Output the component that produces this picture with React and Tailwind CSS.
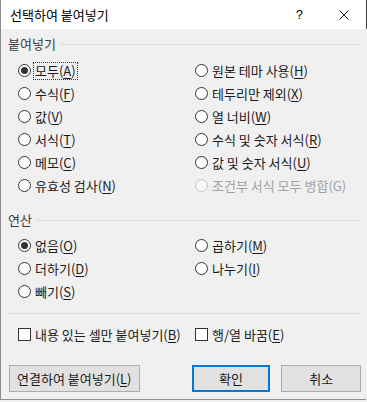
import React from "react";

const FONT = { fontFamily: '"Noto Sans CJK KR", "Noto Sans", sans-serif' };

function Radio({ checked, disabled }) {
  return (
    <span
      className={
        "w-[13px] h-[13px] rounded-full border flex items-center justify-center shrink-0 " +
        (disabled ? "border-[#c4c4c4] bg-[#f7f7f7]" : "border-[#333333] bg-white")
      }
    >
      {checked && <span className="w-[7px] h-[7px] rounded-full bg-[#333333]" />}
    </span>
  );
}

function Check() {
  return <span className="w-[13px] h-[13px] border border-[#333333] bg-white shrink-0" />;
}

function Label({ t, k, disabled, noUnderline }) {
  return (
    <span className={disabled ? "text-[#a0a0a0]" : "text-[#1a1a1a]"}>
      {t}(
      {noUnderline ? k : <span className="underline underline-offset-[2px] decoration-1">{k}</span>})
    </span>
  );
}

function RadioItem({ t, k, checked, disabled, focus }) {
  return (
    <div className="h-[23px] flex items-center">
      <Radio checked={checked} disabled={disabled} />
      {focus ? (
        <span className="ml-[2px] px-[1px] border border-dotted border-[#333333] leading-[16px]">
          <Label t={t} k={k} />
        </span>
      ) : (
        <span className="ml-[4px]">
          <Label t={t} k={k} disabled={disabled} noUnderline={disabled} />
        </span>
      )}
    </div>
  );
}

function GroupLabel({ children }) {
  return (
    <div className="h-[16px] flex items-center">
      <span className="text-[#3a3a3a] leading-[16px]">{children}</span>
      <span className="flex-1 h-px bg-[#dcdcdc] ml-[4px]" />
    </div>
  );
}

function Button({ children, primary, className }) {
  return (
    <div
      className={
        "h-[27px] flex items-center justify-center bg-[#e1e1e1] text-[#1a1a1a] " +
        (primary ? "border-2 border-[#0078d7] " : "border border-[#adadad] ") +
        (className || "")
      }
    >
      {children}
    </div>
  );
}

export default function App() {
  const left = [
    { t: "모두", k: "A", checked: true, focus: true },
    { t: "수식", k: "F" },
    { t: "값", k: "V" },
    { t: "서식", k: "T" },
    { t: "메모", k: "C" },
    { t: "유효성 검사", k: "N" },
  ];
  const right = [
    { t: "원본 테마 사용", k: "H" },
    { t: "테두리만 제외", k: "X" },
    { t: "열 너비", k: "W" },
    { t: "수식 및 숫자 서식", k: "R" },
    { t: "값 및 숫자 서식", k: "U" },
    { t: "조건부 서식 모두 병합", k: "G", disabled: true },
  ];
  const ops = [
    [{ t: "없음", k: "O", checked: true }, { t: "곱하기", k: "M" }],
    [{ t: "더하기", k: "D" }, { t: "나누기", k: "I" }],
    [{ t: "빼기", k: "S" }, null],
  ];

  return (
    <div className="w-[367px] h-[402px] flex bg-[#f0f0f0] text-[13px] leading-[16px]" style={FONT}>
      <div className="w-[366px] h-[400px] flex flex-col border-l border-b border-[#8e8e8e]">
        {/* Title bar */}
        <div className="h-[29px] bg-white flex items-center shrink-0">
          <span className="ml-[9px] text-[13px] text-black">선택하여 붙여넣기</span>
          <span className="ml-auto text-[13px] text-black mr-[36px]" style={{ fontFamily: '"Liberation Sans", sans-serif' }}>?</span>
          <svg width="10" height="10" viewBox="0 0 10 10" className="mr-[17px]">
            <path d="M0.5 0.5 L9.5 9.5 M9.5 0.5 L0.5 9.5" stroke="#111" strokeWidth="1" />
          </svg>
        </div>

        {/* Body */}
        <div className="flex-1 flex flex-col pl-[7px] pr-[5px]">
          <div className="mt-[7px]">
            <GroupLabel>붙여넣기</GroupLabel>
          </div>
          <div className="mt-[7px] ml-[10px] grid grid-cols-[177px_1fr]">
            <div className="flex flex-col">
              {left.map((it) => (
                <RadioItem key={it.k} {...it} />
              ))}
            </div>
            <div className="flex flex-col">
              {right.map((it) => (
                <RadioItem key={it.k} {...it} />
              ))}
            </div>
          </div>

          <div className="mt-[15px]">
            <GroupLabel>연산</GroupLabel>
          </div>
          <div className="mt-[6px] ml-[10px] grid grid-cols-[177px_1fr]">
            {ops.map((row, i) => (
              <React.Fragment key={i}>
                {row[0] ? <RadioItem {...row[0]} /> : <div />}
                {row[1] ? <RadioItem {...row[1]} /> : <div />}
              </React.Fragment>
            ))}
          </div>

          <div className="mt-[10px] h-px bg-[#dcdcdc]" />

          <div className="mt-[9px] ml-[10px] grid grid-cols-[177px_1fr]">
            <div className="h-[23px] flex items-center">
              <Check />
              <span className="ml-[4px] whitespace-nowrap"><Label t="내용 있는 셀만 붙여넣기" k="B" /></span>
            </div>
            <div className="h-[23px] flex items-center">
              <Check />
              <span className="ml-[4px]"><Label t="행/열 바꿈" k="E" /></span>
            </div>
          </div>

          <div className="mt-[19px] flex items-center">
            <Button className="w-[131px] ml-[1px]">
              <Label t="연결하여 붙여넣기" k="L" />
            </Button>
            <Button primary className="w-[79px] ml-[52px]">확인</Button>
            <Button className="w-[80px] ml-[11px]">취소</Button>
          </div>
        </div>
      </div>
      <div className="w-px flex flex-col">
        <div className="h-[29px] bg-[#3c3c3c]" />
      </div>
    </div>
  );
}
